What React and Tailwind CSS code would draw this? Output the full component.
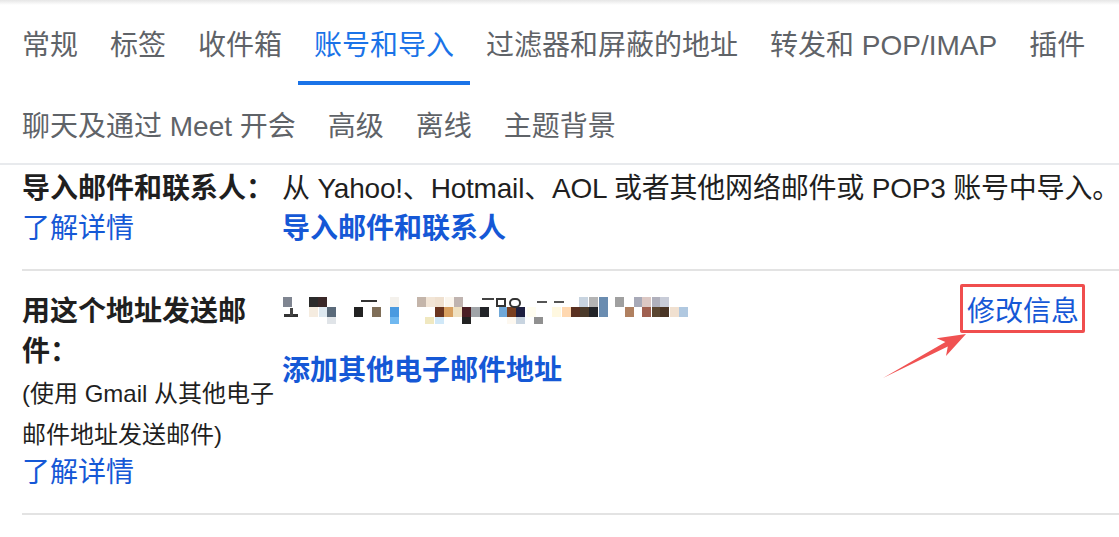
import React from "react";

const tabs1 = ["常规", "标签", "收件箱", "账号和导入", "过滤器和屏蔽的地址", "转发和 POP/IMAP", "插件"];
const tabs2 = ["聊天及通过 Meet 开会", "高级", "离线", "主题背景"];

function Tab({ label, active }) {
  return (
    <div
      className={
        active
          ? "h-[80px] px-4 pt-[6px] flex items-center border-b-4 border-[#1a73e8] text-[#1a73e8] whitespace-nowrap"
          : "h-[80px] px-4 pt-[6px] flex items-center border-b-4 border-transparent text-[#5f6368] whitespace-nowrap"
      }
    >
      {label}
    </div>
  );
}

function Tab2({ label }) {
  return (
    <div className="h-[78px] px-4 pt-[9px] flex items-center border-b-4 border-transparent text-[#5f6368] whitespace-nowrap">
      {label}
    </div>
  );
}

const mosaic = [
  // row a
  [1, 0, "#7f8591"], [27, 0, "#2b2b2b"], [36, 0, "#3a2828"], [108, 0, "#f4f1ec"],
  [135, 0, "#c4b5aa"], [144, 0, "#f2e5d6"], [153, 0, "#efe0cf"], [163, 0, "#fbf6ee"], [172, 0, "#c0b4b0"],
  [297, 0, "#c8d4e0"], [307, 0, "#b4b4b4"], [317, 0, "#6a8cb0"],
  [333, 0, "#a0a0a0"], [352, 0, "#a8aab8"], [360, 0, "#dcc8c4"], [370, 0, "#b0b0bc"], [378, 0, "#c8ccd8"],
  // row b
  [27, 10, "#f5ece0"], [37, 10, "#dde8f0"], [45, 10, "#5a6a7a"], [72, 10, "#222222"], [90, 10, "#7f6e58"],
  [108, 10, "#4a9ae0"], [153, 10, "#6a3520"], [162, 10, "#d8a060"], [171, 10, "#efe0c0"], [180, 10, "#4a1e24"],
  [189, 10, "#a0a4a8"], [198, 10, "#222428"], [217, 10, "#70a8d8"], [225, 10, "#7a4020"], [234, 10, "#1e2040"],
  [245, 10, "#fffdf0"], [270, 10, "#fff8e0"], [280, 10, "#ffd8b0"], [289, 10, "#5a3020"], [298, 10, "#4a3a2a"],
  [307, 10, "#222428"], [317, 10, "#6a8cb0"], [343, 10, "#b08060"], [360, 10, "#a06050"], [370, 10, "#5a4530"],
  [378, 10, "#4a3525"], [388, 10, "#f0e0d0"], [397, 10, "#b0c8e0"],
  // row c
  [45, 20, "#e0e4e8"], [108, 20, "#70b8f0"], [143, 20, "#f0e8c0"], [153, 20, "#d0e8f8"], [180, 20, "#222222"],
  [225, 20, "#fdf8f0"], [234, 20, "#c8d4e0"], [252, 20, "#909090"],
];

function Mosaic() {
  return (
    <svg width="410" height="30" viewBox="0 0 410 30" className="block">
      {mosaic.map(([x, y, c], i) => (
        <rect key={i} x={x} y={y} width="9" height={y === 20 ? 7 : 10} fill={c} />
      ))}
      <rect x="2" y="17" width="14" height="3" fill="#333" />
      <rect x="8" y="11" width="3" height="8" fill="#444" />
      <rect x="79" y="3" width="16" height="2" fill="#333" />
      <rect x="200" y="1" width="12" height="2" fill="#444" />
      <rect x="215" y="2" width="8" height="7" fill="none" stroke="#333" strokeWidth="2" />
      <rect x="228" y="2" width="10" height="8" rx="4" fill="none" stroke="#333" strokeWidth="2" />
      <rect x="255" y="4" width="10" height="2" fill="#555" />
      <rect x="272" y="4" width="10" height="2" fill="#555" />
    </svg>
  );
}

export default function App() {
  return (
    <div className="w-[1119px] h-[537px] bg-white overflow-hidden relative font-['Liberation_Sans','Noto_Sans_CJK_SC',sans-serif]">
      <div className="h-[5px] bg-linear-to-b from-[#e6e6e6] to-white" />
      <div className="border-b-2 border-[#e8eaed] text-[28px]">
        <div className="flex pl-[6px]">
          {tabs1.map((t) => (
            <Tab key={t} label={t} active={t === "账号和导入"} />
          ))}
        </div>
        <div className="flex pl-[6px]">
          {tabs2.map((t) => (
            <Tab2 key={t} label={t} />
          ))}
        </div>
      </div>

      <div className="ml-[22px] text-[28px] text-[#1f1f1f]">
        {/* Row 1 */}
        <div className="flex border-b-2 border-[#e3e3e3] pt-[4px] pb-[20px] leading-[40px]">
          <div className="w-[260px] shrink-0">
            <div className="font-bold whitespace-nowrap">导入邮件和联系人：</div>
            <div className="text-[#1558d6]">了解详情</div>
          </div>
          <div className="flex-1 min-w-0">
            <div className="whitespace-nowrap tracking-[-0.2px]">从 Yahoo!、Hotmail、AOL 或者其他网络邮件或 POP3 账号中导入。</div>
            <div className="font-bold text-[#1558d6]">导入邮件和联系人</div>
          </div>
        </div>

        {/* Row 2 */}
        <div className="flex border-b-2 border-[#e3e3e3] pt-[21px] pb-[22px]">
          <div className="w-[260px] shrink-0">
            <div className="font-bold leading-[40px]">
              用这个地址发送邮
              <br />
              件：
            </div>
            <div className="text-[24px] leading-[41px] mt-[1px]">
              (使用 Gmail 从其他电子
              <br />
              邮件地址发送邮件)
            </div>
            <div className="text-[#1558d6] leading-[36px]">了解详情</div>
          </div>
          <div className="flex-1 flex justify-between pr-[40px]">
            <div>
              <div className="h-[40px] flex items-center">
                <Mosaic />
              </div>
              <div className="mt-[19px] leading-[40px] font-bold text-[#1558d6] whitespace-nowrap">
                添加其他电子邮件地址
              </div>
            </div>
            <div className="relative h-[40px] leading-[40px] text-[#1558d6] whitespace-nowrap">
              修改信息
              <div className="absolute left-[-7px] right-[-6px] top-[-8px] bottom-[-1px] border-[3px] border-[#f04e4e] rounded-[2px]" />
            </div>
          </div>
        </div>
      </div>

      <svg className="absolute left-[870px] top-[325px]" width="110" height="60" viewBox="0 0 110 60">
        <polygon points="13,53 75.4,17.1 66.6,13.3 96,9 76,30.9 77.8,21.5" fill="#f05252" />
      </svg>
    </div>
  );
}
